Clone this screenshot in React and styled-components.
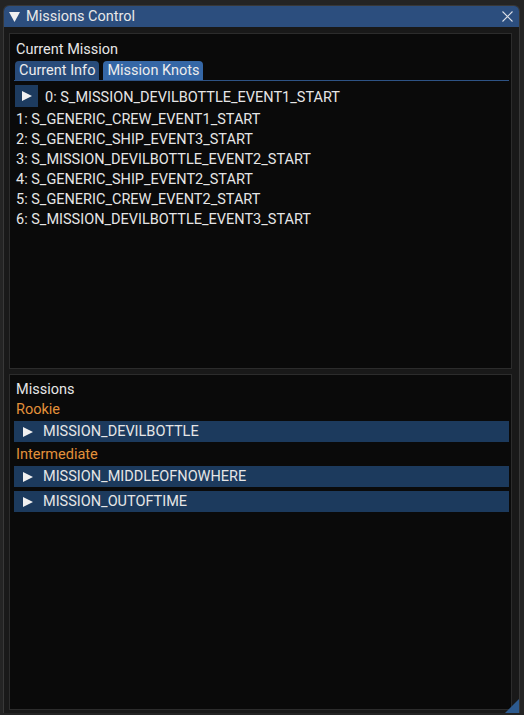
import React from 'react';
import styled, { createGlobalStyle } from 'styled-components';

const GlobalStyle = createGlobalStyle`
  html, body {
    margin: 0;
    padding: 0;
    background: #242424;
    overflow: hidden;
  }
  body {
    font-family: Roboto, "Liberation Sans", sans-serif;
    font-size: 14.5px;
    color: #e6e6e6;
  }
`;

const Window = styled.div`
  position: relative;
  margin: 5px 0 0 3px;
  width: 517px;
  height: 708px;
  box-sizing: border-box;
  background: #191919;
  border: 1px solid #383838;
  border-bottom: none;
  border-radius: 6px 6px 0 0;
  overflow: hidden;
`;

const TitleBar = styled.div`
  display: flex;
  align-items: center;
  height: 21px;
  padding: 0 6px 0 5px;
  background: #2c4e7e;
  color: #e8e8e8;
  gap: 6px;
`;

const TitleText = styled.span`
  flex: 1;
  line-height: 21px;
`;

const CloseButton = styled.div`
  display: flex;
  align-items: center;
  justify-content: center;
  width: 12px;
  height: 12px;
`;

const Body = styled.div`
  display: flex;
  flex-direction: column;
  gap: 5px;
  padding: 6px 7px 0 5px;
`;

const Child = styled.div`
  height: 336px;
  box-sizing: border-box;
  background: #0a0a0a;
  border: 1px solid #2c2c2c;
  padding: ${(p) => p.$pad}px 1px 0 4px;
  display: flex;
  flex-direction: column;
  gap: 4px;
`;

const Label = styled.div`
  line-height: 18px;
  height: 16px;
  padding-left: 2px;
  color: ${(p) => p.$color || '#e6e6e6'};
  white-space: nowrap;
`;

const TabBar = styled.div`
  display: flex;
  gap: 4px;
  margin-right: 1px;
  border-bottom: 1px solid #2e5385;
  padding-left: 1px;
`;

const Tab = styled.div`
  height: 19px;
  line-height: 20px;
  padding: 0 4px;
  border-radius: 4px 4px 0 0;
  background: ${(p) => (p.$active ? '#3567a6' : '#284b7a')};
  color: #ececec;
  white-space: nowrap;
`;

const KnotRow = styled.div`
  display: flex;
  align-items: center;
  gap: 7px;
  height: 22px;
  padding-left: 1px;
`;

const KnotText = styled.span`
  padding-top: 2px;
`;

const ArrowButton = styled.div`
  display: flex;
  align-items: center;
  justify-content: center;
  width: 23px;
  height: 22px;
  background: #1d3b5f;
`;

const Header = styled.div`
  display: flex;
  align-items: center;
  height: 21px;
  margin-right: 1px;
  background: #1c3a5d;
  padding-left: 9px;
  gap: 10px;
  color: #e6e6e6;
  white-space: nowrap;
`;

const Grip = styled.div`
  position: absolute;
  right: 0;
  bottom: 0;
  width: 14px;
  height: 14px;
  background: #2d5a8e;
  clip-path: polygon(100% 0, 100% 100%, 0 100%);
`;

const Triangle = ({ dir = 'right', size = 10 }) =>
  dir === 'right' ? (
    <svg width={size} height={size} viewBox="0 0 10 10">
      <polygon points="0,0 10,5 0,10" fill="#f0f0f0" />
    </svg>
  ) : (
    <svg width={size + 1} height={size} viewBox="0 0 11 10">
      <polygon points="0,0 11,0 5.5,10" fill="#f0f0f0" />
    </svg>
  );

const knots = [
  '1: S_GENERIC_CREW_EVENT1_START',
  '2: S_GENERIC_SHIP_EVENT3_START',
  '3: S_MISSION_DEVILBOTTLE_EVENT2_START',
  '4: S_GENERIC_SHIP_EVENT2_START',
  '5: S_GENERIC_CREW_EVENT2_START',
  '6: S_MISSION_DEVILBOTTLE_EVENT3_START',
];

const groups = [
  { name: 'Rookie', missions: ['MISSION_DEVILBOTTLE'] },
  { name: 'Intermediate', missions: ['MISSION_MIDDLEOFNOWHERE', 'MISSION_OUTOFTIME'] },
];

export default function App() {
  return (
    <>
      <GlobalStyle />
      <Window>
        <TitleBar>
          <Triangle dir="down" />
          <TitleText>Missions Control</TitleText>
          <CloseButton>
            <svg width="11" height="11" viewBox="0 0 11 11">
              <path d="M0.5 0.5 L10.5 10.5 M10.5 0.5 L0.5 10.5" stroke="#d8dde6" strokeWidth="1.1" />
            </svg>
          </CloseButton>
        </TitleBar>
        <Body>
          <Child $pad={7}>
            <Label>Current Mission</Label>
            <TabBar>
              <Tab>Current Info</Tab>
              <Tab $active>Mission Knots</Tab>
            </TabBar>
            <KnotRow>
              <ArrowButton>
                <Triangle />
              </ArrowButton>
              <KnotText>0: S_MISSION_DEVILBOTTLE_EVENT1_START</KnotText>
            </KnotRow>
            {knots.map((k) => (
              <Label key={k}>{k}</Label>
            ))}
          </Child>
          <Child $pad={6}>
            <Label>Missions</Label>
            {groups.map((g) => (
              <React.Fragment key={g.name}>
                <Label $color="#e3913a">{g.name}</Label>
                {g.missions.map((m) => (
                  <Header key={m}>
                    <Triangle />
                    <span>{m}</span>
                  </Header>
                ))}
              </React.Fragment>
            ))}
          </Child>
        </Body>
        <Grip />
      </Window>
    </>
  );
}
